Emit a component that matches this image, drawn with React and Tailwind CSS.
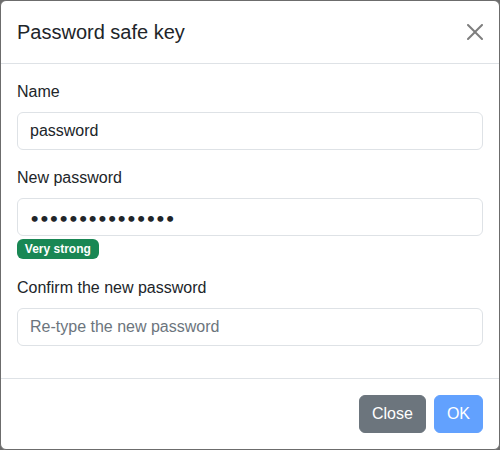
import { useState } from 'react'

function CloseIcon() {
  return (
    <svg viewBox="0 0 16 16" className="w-4 h-4" aria-hidden="true">
      <path
        fill="#000"
        d="M.293.293a1 1 0 0 1 1.414 0L8 6.586 14.293.293a1 1 0 1 1 1.414 1.414L9.414 8l6.293 6.293a1 1 0 0 1-1.414 1.414L8 9.414l-6.293 6.293a1 1 0 0 1-1.414-1.414L6.586 8 .293 1.707a1 1 0 0 1 0-1.414"
      />
    </svg>
  )
}

function Field({ label, children }) {
  return (
    <div className="mb-4">
      <label className="block mb-2 text-base leading-6 text-[#212529]">{label}</label>
      {children}
    </div>
  )
}

const inputClass =
  'block w-full h-[38px] px-3 py-1.5 text-base leading-6 text-[#212529] bg-white border border-[#dee2e6] rounded-[6px] outline-none placeholder:text-[#6c757d]'

export default function App() {
  const [name, setName] = useState('password')
  const [pass, setPass] = useState('aaaaaaaaaaaaaaa')
  const [confirm, setConfirm] = useState('')

  return (
    <div className="w-[500px] h-[450px] bg-[#6c6c6c] font-['Liberation_Sans',Arial,sans-serif]">
      <div className="w-[500px] h-[450px] bg-white border border-[#6c6c6c] rounded-[6px] flex flex-col">
        {/* Header */}
        <div className="flex items-center p-4 border-b border-[#dee2e6]">
          <h5 className="text-xl leading-[30px] text-[#212529]">Password safe key</h5>
          <button className="ml-auto -mr-2 -my-2 p-2 opacity-50" aria-label="Close">
            <CloseIcon />
          </button>
        </div>

        {/* Body */}
        <div className="flex-1 p-4">
          <Field label="Name">
            <input className={inputClass} value={name} onChange={e => setName(e.target.value)} />
          </Field>
          <div className="mb-4">
            <label className="block mb-2 text-base leading-6 text-[#212529]">New password</label>
            <input
              type="password"
              className={`${inputClass} font-['Lato',sans-serif] tracking-[0.4px]`}
              value={pass}
              onChange={e => setPass(e.target.value)}
            />
            <span className="inline-block mt-[3px] px-[7.8px] py-[4.2px] text-xs leading-none font-bold text-white bg-[#198754] rounded-[6px]">
              Very strong
            </span>
          </div>
          <Field label="Confirm the new password">
            <input
              type="password"
              className={inputClass}
              placeholder="Re-type the new password"
              value={confirm}
              onChange={e => setConfirm(e.target.value)}
            />
          </Field>
        </div>

        {/* Footer */}
        <div className="flex justify-end items-center px-3 py-3 border-t border-[#dee2e6]">
          <button className="m-1 h-[38px] px-3 text-base leading-6 text-white bg-[#6c757d] border border-[#6c757d] rounded-[6px]">
            Close
          </button>
          <button disabled className="m-1 h-[38px] px-3 text-base leading-6 text-white bg-[#62a1fe] border border-[#62a1fe] rounded-[6px]">
            OK
          </button>
        </div>
      </div>
    </div>
  )
}
